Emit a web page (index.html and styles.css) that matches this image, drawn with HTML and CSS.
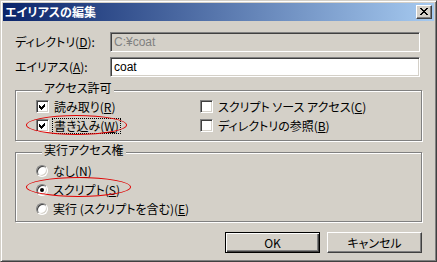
FILE: index.html
```html
<!DOCTYPE html>
<html lang="ja">
<head>
    <meta charset="UTF-8">
    <title>エイリアスの編集</title>
    <link rel="stylesheet" href="styles.css">
</head>
<body>
    <div class="window">
        <div class="titlebar">
            <span class="title">エイリアスの編集</span>
            <button class="close-btn" aria-label="閉じる">
                <svg width="8" height="7" viewBox="0 0 8 7" shape-rendering="crispEdges">
                    <path d="M0 0h2v1h1v1h2v-1h1v-1h2v1h-1v1h-1v1h-1v1h1v1h1v1h1v1h-2v-1h-1v-1h-2v1h-1v1h-2v-1h1v-1h1v-1h1v-1h-1v-1h-1v-1h-1z" fill="#000"/>
                </svg>
            </button>
        </div>
        <div class="content">
            <div class="field">
                <span class="field-label">ディレクトリ(<u>D</u>):</span>
                <div class="textbox disabled">C:¥coat</div>
            </div>
            <div class="field">
                <span class="field-label">エイリアス(<u>A</u>):</span>
                <div class="textbox">coat</div>
            </div>

            <fieldset class="group group-perms">
                <legend>アクセス許可</legend>
                <div class="check-grid">
                    <div class="option">
                        <span class="checkbox checked"><svg width="7" height="7" viewBox="0 0 7 7" shape-rendering="crispEdges"><path d="M6 0v3l-4 4-2-2v-3l2 2z" fill="#000"/></svg></span>
                        <span class="option-label">読み取り(<u>R</u>)</span>
                    </div>
                    <div class="option">
                        <span class="checkbox"></span>
                        <span class="option-label">スクリプト ソース アクセス(<u>C</u>)</span>
                    </div>
                    <div class="option">
                        <span class="checkbox checked"><svg width="7" height="7" viewBox="0 0 7 7" shape-rendering="crispEdges"><path d="M6 0v3l-4 4-2-2v-3l2 2z" fill="#000"/></svg></span>
                        <span class="option-label focused">書き込み(<u>W</u>)</span>
                    </div>
                    <div class="option">
                        <span class="checkbox"></span>
                        <span class="option-label">ディレクトリの参照(<u>B</u>)</span>
                    </div>
                </div>
            </fieldset>

            <fieldset class="group group-exec">
                <legend>実行アクセス権</legend>
                <div class="radio-list">
                    <div class="option">
                        <span class="radio"></span>
                        <span class="option-label">なし(<u>N</u>)</span>
                    </div>
                    <div class="option">
                        <span class="radio checked"></span>
                        <span class="option-label">スクリプト(<u>S</u>)</span>
                    </div>
                    <div class="option">
                        <span class="radio"></span>
                        <span class="option-label">実行 (スクリプトを含む)(<u>E</u>)</span>
                    </div>
                </div>
            </fieldset>

            <div class="buttons">
                <button class="btn default">OK</button>
                <button class="btn">キャンセル</button>
            </div>
        </div>

        <!-- red annotation marks -->
        <span class="mark mark-write"></span>
        <span class="mark mark-script"></span>
    </div>
</body>
</html>
```

FILE: styles.css
```css
* {
    box-sizing: border-box;
    margin: 0;
    padding: 0;
}
body {
    font-family: "Noto Sans CJK JP", "Liberation Sans", sans-serif;
    font-size: 12px;
    font-feature-settings: "palt";
    color: #000;
    background-color: #d4d0c8;
    width: 437px;
    height: 262px;
    overflow: hidden;
}
.window {
    position: relative;
    width: 437px;
    height: 262px;
    background-color: #d4d0c8;
    border: 1px solid;
    border-color: #d4d0c8 #404040 #404040 #d4d0c8;
    box-shadow: inset 1px 1px 0 #fff, inset -1px -1px 0 #808080;
    padding: 2px;
    display: flex;
    flex-direction: column;
}
.titlebar {
    height: 18px;
    display: flex;
    align-items: center;
    justify-content: space-between;
    padding: 0 2px 0 2px;
    background: linear-gradient(to right, #0a246a, #a6caf0);
}
.title {
    color: #fff;
    font-weight: bold;
    font-size: 12px;
    line-height: 18px;
}
.close-btn {
    width: 16px;
    height: 14px;
    display: flex;
    align-items: center;
    justify-content: center;
    background-color: #d4d0c8;
    border: 1px solid;
    border-color: #fff #404040 #404040 #fff;
    box-shadow: inset -1px -1px 0 #808080;
    padding: 0 1px 1px 0;
}
.content {
    flex: 1;
    display: flex;
    flex-direction: column;
    padding: 11px 12px 0 12px;
}
.field {
    display: flex;
    align-items: center;
    height: 20px;
    margin-bottom: 5px;
}
.field-label {
    width: 95px;
    line-height: 20px;
}
.textbox {
    width: 310px;
    height: 20px;
    line-height: 16px;
    padding: 1px 3px;
    background-color: #fff;
    border: 1px solid;
    border-color: #808080 #fff #fff #808080;
    box-shadow: inset 1px 1px 0 #404040, inset -1px -1px 0 #d4d0c8;
    font-family: "Liberation Sans", sans-serif;
    font-size: 12px;
}
.textbox.disabled {
    background-color: #d4d0c8;
    color: #808080;
}
.group {
    border: 1px solid #808080;
    box-shadow: inset 1px 1px 0 #fff, 1px 1px 0 #fff;
}
.group legend {
    margin-left: 6px;
    padding: 0 2px 4px 2px;
    line-height: 12px;
    background-color: #d4d0c8;
}
.group-perms {
    margin-top: 0;
    padding: 0 0 6px 20px;
}
.group-exec {
    margin-top: 3px;
    padding: 2px 0 4px 20px;
}
.check-grid {
    display: grid;
    grid-template-columns: 164px auto;
    row-gap: 2px;
}
.radio-list {
    display: flex;
    flex-direction: column;
    gap: 2px;
}
.option {
    display: flex;
    align-items: center;
    height: 17px;
    gap: 4px;
}
.option-label {
    line-height: 14px;
    padding: 0 1px;
}
.option-label.focused {
    outline: 1px dotted #000;
}
.checkbox {
    width: 13px;
    height: 13px;
    display: flex;
    align-items: center;
    justify-content: center;
    background-color: #fff;
    border: 1px solid;
    border-color: #808080 #fff #fff #808080;
    box-shadow: inset 1px 1px 0 #404040, inset -1px -1px 0 #d4d0c8;
}
.radio {
    width: 12px;
    height: 12px;
    display: flex;
    align-items: center;
    justify-content: center;
    border-radius: 50%;
    background-color: #fff;
    border: 1px solid;
    border-color: #808080 #fff #fff #808080;
    box-shadow: inset 1px 1px 0 #404040, inset -1px -1px 0 #d4d0c8;
}
.radio.checked::after {
    content: "";
    width: 4px;
    height: 4px;
    border-radius: 50%;
    background-color: #000;
}
.buttons {
    display: flex;
    justify-content: flex-end;
    gap: 7px;
    margin-top: 10px;
}
.btn {
    width: 95px;
    height: 21px;
    font-family: "Noto Sans CJK JP", "Liberation Sans", sans-serif;
    font-size: 12px;
    font-feature-settings: "palt";
    background-color: #d4d0c8;
    color: #000;
    border: 1px solid;
    border-color: #fff #404040 #404040 #fff;
    box-shadow: inset -1px -1px 0 #808080;
}
.btn.default {
    border: 1px solid #000;
    box-shadow: inset 1px 1px 0 #fff, inset -1px -1px 0 #404040, inset -2px -2px 0 #808080;
}
.mark {
    position: absolute;
    border: 1px solid #e00000;
    border-radius: 50%;
}
.mark-write {
    left: 25px;
    top: 114px;
    width: 101px;
    height: 20px;
}
.mark-script {
    left: 25px;
    top: 176px;
    width: 105px;
    height: 20px;
}
```
